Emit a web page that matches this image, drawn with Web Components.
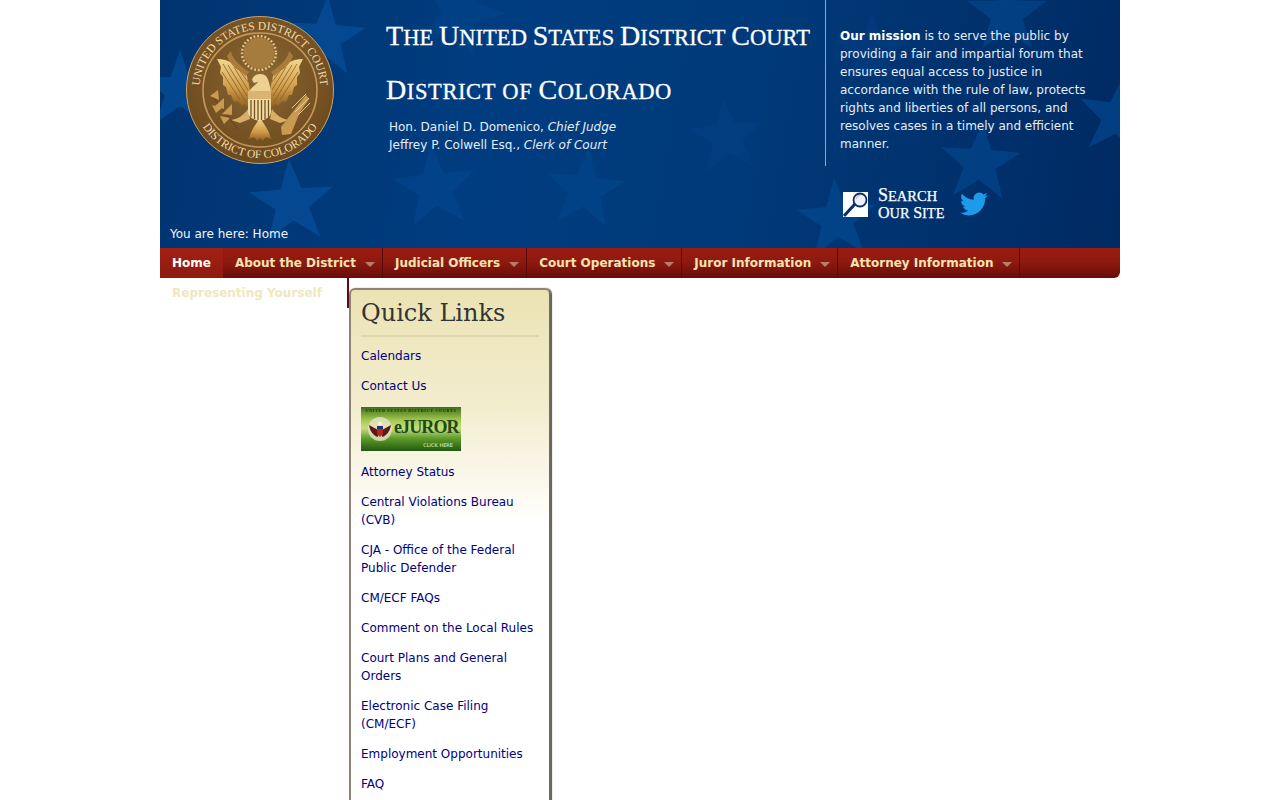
<!DOCTYPE html>
<html lang="en">
<head>
<meta charset="utf-8">
<title>U.S. District Court - District of Colorado</title>
<style>
  html, body { margin: 0; padding: 0; height: 800px; overflow: hidden; background: #fff; }
  body { font: 12px/18px "DejaVu Sans", sans-serif; }
  .wrapper { width: 960px; margin: 0 auto; }
</style>
</head>
<body>
<div class="wrapper">
  <court-header>
    <span slot="breadcrumb">You are here: Home</span>
  </court-header>
  <main-nav>
    <nav-item active>Home</nav-item>
    <nav-item arrow>About the District</nav-item>
    <nav-item arrow>Judicial Officers</nav-item>
    <nav-item arrow>Court Operations</nav-item>
    <nav-item arrow>Juror Information</nav-item>
    <nav-item arrow>Attorney Information</nav-item>
    <nav-item wrapped>Representing Yourself</nav-item>
  </main-nav>
  <quick-links>
    <quick-link>Calendars</quick-link>
    <quick-link>Contact Us</quick-link>
    <ejuror-banner></ejuror-banner>
    <quick-link>Attorney Status</quick-link>
    <quick-link>Central Violations Bureau (CVB)</quick-link>
    <quick-link>CJA - Office of the Federal Public Defender</quick-link>
    <quick-link>CM/ECF FAQs</quick-link>
    <quick-link>Comment on the Local Rules</quick-link>
    <quick-link>Court Plans and General Orders</quick-link>
    <quick-link>Electronic Case Filing (CM/ECF)</quick-link>
    <quick-link>Employment Opportunities</quick-link>
    <quick-link>FAQ</quick-link>
  </quick-links>
</div>

<script>
// x, y, radius, rotation, opacity of the stars behind the header
const STARS = [
  [165, 38, 42, 4, 0.8], [20, 90, 40, 0, 0.8], [132, 203, 44, -4, 0.8],
  [275, 188, 44, -6, 0.4], [425, 190, 42, 6, 0.35], [300, 12, 46, 20, 0.3],
  [567, 137, 40, -6, 0.2], [820, 163, 42, 4, 0.55], [677, 220, 42, -4, 0.6],
  [847, 14, 42, 0, 0.55], [958, 117, 42, 8, 0.6], [712, 52, 40, 0, 0.2]
];
const STAR_POINTS = '0,-1 .235,-.324 .951,-.309 .38,.124 .588,.809 0,.4 -.588,.809 -.38,.124 -.951,-.309 -.235,-.324';

// wraps each word so its first letter can be a bigger capital ("of" stays small)
function capWords(text) {
  return text.split(' ').map(w => `<span class="w${w === 'of' ? ' low' : ''}">${w}</span>`).join(' ');
}

class CourtSeal extends HTMLElement {
  constructor() {
    super();
    this.attachShadow({ mode: 'open' });
    this.shadowRoot.innerHTML = `
      <style>
        :host { display: block; width: 148px; height: 148px; }
        svg { display: block; }
        text { font-family: "Liberation Serif", serif; fill: #f2dcae; }
      </style>
      <svg width="148" height="148" viewBox="0 0 148 148">
        <defs>
          <radialGradient id="disc" cx="50%" cy="40%" r="65%">
            <stop offset="0" stop-color="#8a6630"/><stop offset="1" stop-color="#6a471d"/>
          </radialGradient>
          <linearGradient id="gold" x1="0" y1="0" x2="0" y2="1">
            <stop offset="0" stop-color="#f3d68f"/><stop offset=".6" stop-color="#cf9c49"/><stop offset="1" stop-color="#8a5c20"/>
          </linearGradient>
          <path id="topArc" d="M 13.5 74 A 60.5 60.5 0 0 1 134.5 74"/>
          <path id="botArc" d="M 6 74 A 68 68 0 0 0 142 74"/>
          <g id="wing">
            <path d="M31 43 C42 43 53 49 61 60 L64 74 L63 92 L58 88 L56 90 L51 85 L48 86 L45 79 L42 79 L40 71 L37 69 L37 61 L34 57 L35 51Z" fill="url(#gold)"/>
            <path d="M37 48 L60 86 M42 49 L61 80 M48 51 L62 74 M54 55 L62 66 M36 56 L54 84" stroke="#8a5c20" stroke-width=".8" fill="none"/>
            <path d="M45 35 C46 43 54 50 63 56 L60 60 C52 54 44 49 41 40Z" fill="#a97c3c"/>
          </g>
        </defs>
        <circle cx="74" cy="74" r="73.5" fill="url(#disc)" stroke="#c9a467" stroke-width="1"/>
        <circle cx="74" cy="74" r="57" fill="none" stroke="#c39a5c" stroke-width="1.6"/>
        <text font-size="11.5" text-anchor="middle"><textPath href="#topArc" startOffset="50%">UNITED STATES DISTRICT COURT</textPath></text>
        <text font-size="11.5" text-anchor="middle"><textPath href="#botArc" startOffset="50%">DISTRICT OF COLORADO</textPath></text>
        <!-- glory -->
        <circle cx="73" cy="37" r="15.5" fill="#a57c3e"/>
        <circle cx="73" cy="37" r="17" fill="none" stroke="#e6c88c" stroke-width="2.4" stroke-dasharray="1.8 1.9"/>
        <!-- wings -->
        <use href="#wing"/>
        <use href="#wing" transform="translate(148 0) scale(-1 1)"/>
        <!-- head -->
        <path d="M66 64 C67 58 76 56 80 60 C83 64 84 70 85 76 L63 76 C65 71 70 69 72 66 L68 67Z" fill="#ecd193"/>
        <!-- tail, legs -->
        <path d="M74 102 C78 108 83 114 85 123 L80 121 L77 125 L74 122 L71 125 L68 121 L63 123 C65 114 70 108 74 102Z" fill="url(#gold)"/>
        <path d="M45 104 C52 103 58 99 62 93 L64 103 L54 107Z M103 104 C96 103 90 99 86 93 L84 103 L94 107Z" fill="#d8ae68"/>
        <!-- shield -->
        <path d="M62 75 H85 V96 C85 101 79 104 73.500 105 C68 104 62 101 62 96Z" fill="#f0dca6"/>
        <path d="M62 75 H85 V83 H62Z" fill="#d9b472"/>
        <path d="M65 84 V101 M68.500 84 V103 M72 84 V104 M75.500 84 V104 M79 84 V103 M82.500 84 V101" stroke="#7a5220" stroke-width="1.3"/>
        <!-- olive branch -->
        <path d="M26 80 L52 113" stroke="#6b461a" stroke-width="1.2"/>
        <path d="M24 80 L32 74 L33 84Z M29 90 L38 82 L38 93Z M36 98 L46 88 L46 99Z M26 89 L36 92 L30 97Z M34 100 L44 102 L38 108Z" fill="#c99a52"/>
        <!-- arrows -->
        <path d="M95 111 L120 79 L123 83 L114 96 L105 118 L96 119Z" fill="#c99a52"/>
        <path d="M106 92 L120 78 M109 96 L123 82 M112 99 L124 87" stroke="#e8cb8e" stroke-width="1"/>
      </svg>
    `;
  }
}

class SearchLink extends HTMLElement {
  constructor() {
    super();
    this.attachShadow({ mode: 'open' });
    this.shadowRoot.innerHTML = `
      <style>
        :host { display: flex; align-items: center; }
        svg { display: block; flex: none; }
        .label {
          margin-left: 10px;
          font: 14.5px/18px "Liberation Serif", serif;
          color: #fff;
          -webkit-text-stroke: .25px #fff;
          white-space: nowrap;
        }
        .ln { height: 18px; }
        .w { display: inline-block; text-transform: uppercase; }
        .big .w::first-letter { font-size: 18px; }
        .small { font-size: 14.4px; }
        .small .w::first-letter { font-size: 16px; }
        .bird { margin-left: 16px; }
      </style>
      <svg width="25" height="25" viewBox="0 0 25 25">
        <path d="M0 0 H25 V25 H0Z" fill="#fff"/>
        <path d="M1 24 L12 12" fill="none" stroke="#0a2f66" stroke-width="3"/>
        <circle cx="17" cy="8" r="6.500" fill="#eef2f6" stroke="#0a2f66" stroke-width="1.800"/>
        <path d="M13 7 A4.500 4.500 0 0 1 17 3.500" fill="none" stroke="#9fb2cc" stroke-width="1"/>
      </svg>
      <div class="label">
        <div class="ln big">${capWords('Search')}</div>
        <div class="ln small">${capWords('our site')}</div>
      </div>
      <svg class="bird" width="28" height="28" viewBox="0 0 24 24">
        <path fill="#1d9bea" d="M23.953 4.57a10 10 0 01-2.825.775 4.958 4.958 0 002.163-2.723c-.951.555-2.005.959-3.127 1.184a4.92 4.92 0 00-8.384 4.482C7.69 8.095 4.067 6.13 1.64 3.162a4.822 4.822 0 00-.666 2.475c0 1.71.87 3.213 2.188 4.096a4.904 4.904 0 01-2.228-.616v.06a4.923 4.923 0 003.946 4.827 4.996 4.996 0 01-2.212.085 4.936 4.936 0 004.604 3.417 9.867 9.867 0 01-6.102 2.105c-.39 0-.779-.023-1.17-.067a13.995 13.995 0 007.557 2.209c9.053 0 13.998-7.496 13.998-13.985 0-.21 0-.42-.015-.63A9.935 9.935 0 0024 4.59z"/>
      </svg>
    `;
  }
}

class CourtHeader extends HTMLElement {
  constructor() {
    super();
    this.attachShadow({ mode: 'open' });
    const stars = STARS.map(([x, y, r, rot, op]) =>
      `<polygon points="${STAR_POINTS}" fill="#044c96" opacity="${op}" transform="translate(${x} ${y}) rotate(${rot}) scale(${r})"/>`
    ).join('');
    this.shadowRoot.innerHTML = `
      <style>
        :host {
          display: grid;
          grid-template-columns: 226px 439px 295px;
          height: 248px;
          position: relative;
          overflow: hidden;
          color: #fff;
          background: linear-gradient(100deg, #003471 0%, #003d80 35%, #003a7a 60%, #002a62 100%);
        }
        .stars { position: absolute; left: 0; top: 0; }
        .col { position: relative; display: flex; flex-direction: column; }
        .left { padding: 16px 0 5px 26px; }
        .crumb { margin: auto 0 0 -16px; color: #f2f5f8; }
        .middle { padding-top: 9px; }
        h1 {
          margin: 0;
          height: 54px;
          font: 22.5px/54px "Liberation Serif", serif;
          letter-spacing: .05px;
          -webkit-text-stroke: .3px #fff;
          white-space: nowrap;
          color: #fff;
        }
        h1.second { letter-spacing: .6px; }
        .w { display: inline-block; text-transform: uppercase; }
        .w::first-letter { font-size: 28px; }
        .w.low::first-letter { font-size: inherit; }
        .officers { margin: 0 0 0 3px; padding-top: 1px; color: #e6edf5; }
        .mission-box {
          height: 166px;
          box-sizing: border-box;
          border-left: 1px solid #8aa9d0;
          padding: 27px 20px 0 14px;
          color: #e6edf5;
        }
        .mission-box b { color: #fff; }
        p { margin: 0; }
        search-link { margin: 20px 0 0 18px; }
      </style>
      <svg class="stars" width="960" height="248" viewBox="0 0 960 248">${stars}</svg>
      <div class="col left">
        <court-seal></court-seal>
        <div class="crumb"><slot name="breadcrumb"></slot></div>
      </div>
      <div class="col middle">
        <h1>${capWords('The United States District Court')}</h1>
        <h1 class="second">${capWords('District of Colorado')}</h1>
        <p class="officers">Hon. Daniel D. Domenico, <i>Chief Judge</i><br>Jeffrey P. Colwell Esq., <i>Clerk of Court</i></p>
      </div>
      <div class="col">
        <div class="mission-box">
          <p><b>Our mission</b> is to serve the public by providing a fair and impartial forum that ensures equal access to justice in accordance with the rule of law, protects rights and liberties of all persons, and resolves cases in a timely and efficient manner.</p>
        </div>
        <search-link></search-link>
      </div>
    `;
  }
}

class MainNav extends HTMLElement {
  constructor() {
    super();
    this.attachShadow({ mode: 'open' });
    this.shadowRoot.innerHTML = `
      <style>
        :host {
          display: flex;
          flex-wrap: wrap;
          align-content: flex-start;
          height: 30px;
          border-radius: 0 0 6px 0;
          background: linear-gradient(#9a1b11 0%, #8f1a10 45%, #680d08 100%);
        }
      </style>
      <slot></slot>
    `;
  }
}

class NavItem extends HTMLElement {
  constructor() {
    super();
    this.attachShadow({ mode: 'open' });
    this.shadowRoot.innerHTML = `
      <style>
        :host {
          display: flex;
          align-items: center;
          box-sizing: border-box;
          height: 30px;
          padding: 0 12px;
          border-right: 1px solid #5a0b07;
          font-weight: bold;
          font-size: 12px;
          color: #f5e3b2;
          white-space: nowrap;
        }
        :host([active]) {
          color: #fff;
          border-right: 0;
          background: linear-gradient(#a32013, #8f1a10);
        }
        :host([arrow]) { padding-right: 7px; }
        :host([wrapped]) { width: 189px; border-right: 2px solid #5e0a10; color: #efe7bd; }
        .arrow {
          display: none;
          width: 0;
          height: 0;
          margin: 2px 0 0 9px;
          border: 5px solid transparent;
          border-top-color: #b97d6c;
          border-bottom: 0;
        }
        :host([arrow]) .arrow { display: block; }
      </style>
      <slot></slot><span class="arrow"></span>
    `;
  }
}

class QuickLinks extends HTMLElement {
  constructor() {
    super();
    this.attachShadow({ mode: 'open' });
    this.shadowRoot.innerHTML = `
      <style>
        :host {
          display: block;
          box-sizing: border-box;
          width: 202px;
          min-height: 560px;
          margin: 10px 0 0 189px;
          padding: 0 10px 20px;
          border: 2px solid #8d8474;
          border-right-color: #6f6a60;
          border-radius: 6px 6px 0 0;
          box-shadow: 1px 0 1px #555;
          background: linear-gradient(#ebe3b4 0, #f3edcf 120px, #fff 235px);
        }
        h2 {
          margin: 0 0 10px;
          padding: 6px 0 5px;
          font: 24px/34px "DejaVu Serif", serif;
          color: #333;
          border-bottom: 2px solid #dcd5ad;
        }
        .list { display: flex; flex-direction: column; gap: 12px; }
      </style>
      <h2>Quick Links</h2>
      <div class="list"><slot></slot></div>
    `;
  }
}

class QuickLink extends HTMLElement {
  constructor() {
    super();
    this.attachShadow({ mode: 'open' });
    this.shadowRoot.innerHTML = `
      <style>
        :host { display: block; color: #000080; line-height: 18px; }
      </style>
      <slot></slot>
    `;
  }
}

class EjurorBanner extends HTMLElement {
  constructor() {
    super();
    this.attachShadow({ mode: 'open' });
    this.shadowRoot.innerHTML = `
      <style>
        :host {
          display: block;
          position: relative;
          width: 100px;
          height: 44px;
          overflow: hidden;
          background: linear-gradient(#3c6e1a 0, #a5c950 30%, #c9dc80 48%, #5c9a2a 72%, #1f5a10 100%);
        }
        .top {
          position: absolute; left: 0; right: 0; top: 1px;
          text-align: center;
          white-space: nowrap;
          font: bold 4px/6px "Liberation Serif", serif;
          letter-spacing: .75px;
          color: #17340c;
        }
        svg { position: absolute; left: 6px; top: 9px; }
        .name {
          position: absolute; left: 33px; top: 8px;
          font: bold 18px/24px "Liberation Serif", serif;
          letter-spacing: -.9px;
          white-space: nowrap;
          color: #1c4a18;
        }
        .click {
          position: absolute; right: 8px; bottom: 2px;
          font: 5px/8px "DejaVu Sans", sans-serif;
          color: #e6f0d0;
        }
      </style>
      <div class="top">UNITED STATES DISTRICT COURTS</div>
      <svg width="26" height="26" viewBox="0 0 26 26">
        <circle cx="13" cy="13" r="12" fill="#e9e4cc" opacity=".8"/>
        <path d="M2 9 L11 14 L11 21 C7 20 3 16 2 9Z M24 9 L15 14 L15 21 C19 20 23 16 24 9Z" fill="#5a1a16"/>
        <path d="M10 10 H16 V18 L13 21 L10 18Z" fill="#b3261e"/>
        <path d="M10 10 H16 V13 H10Z" fill="#27346e"/>
        <circle cx="13" cy="7.500" r="2" fill="#f4f1e4"/>
      </svg>
      <span class="name">eJUROR</span>
      <span class="click">CLICK HERE</span>
    `;
  }
}

customElements.define('court-seal', CourtSeal);
customElements.define('search-link', SearchLink);
customElements.define('court-header', CourtHeader);
customElements.define('main-nav', MainNav);
customElements.define('nav-item', NavItem);
customElements.define('quick-links', QuickLinks);
customElements.define('quick-link', QuickLink);
customElements.define('ejuror-banner', EjurorBanner);
</script>
</body>
</html>
